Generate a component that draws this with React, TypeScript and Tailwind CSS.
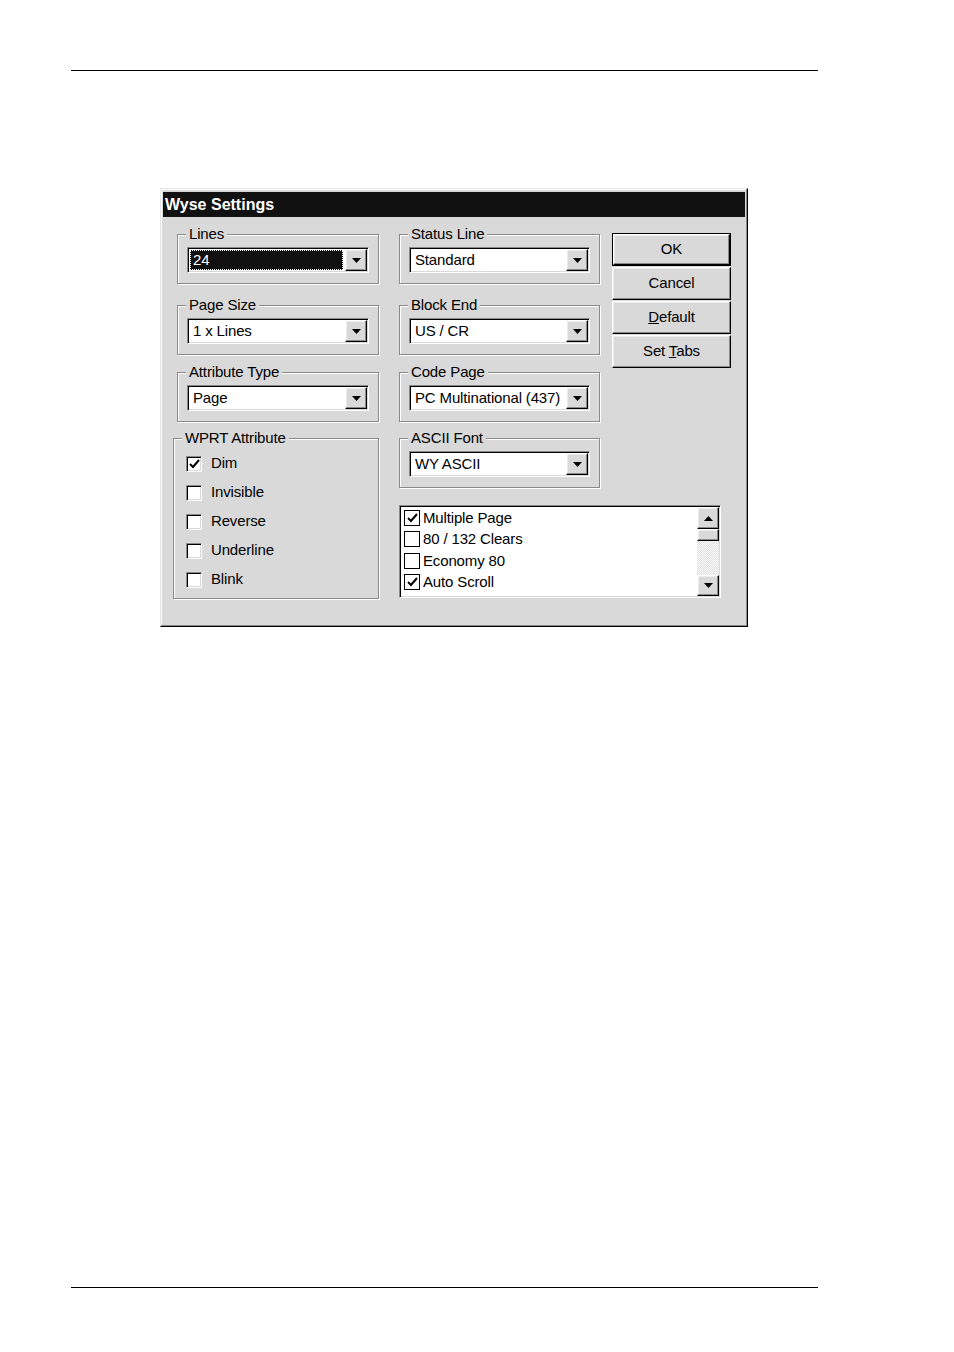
import type { ReactNode } from "react";

const face = "bg-[#d9d9d9]";
const raised =
  "border border-t-white border-l-white border-r-black border-b-black shadow-[inset_-1px_-1px_0_#8a8a8a,inset_1px_1px_0_#ececec]";
const sunken =
  "border border-t-[#8a8a8a] border-l-[#8a8a8a] border-r-white border-b-white shadow-[inset_1px_1px_0_#000,inset_-1px_-1px_0_#d9d9d9]";

function Tri({ up }: { up?: boolean }) {
  return (
    <svg width="9" height="5" viewBox="0 0 9 5">
      <polygon points={up ? "0,5 9,5 4.5,0" : "0,0 9,0 4.5,5"} fill="#000" />
    </svg>
  );
}

function Check() {
  return (
    <svg width="11" height="10" viewBox="0 0 11 10">
      <path d="M1 5 L4 8 L10 1" stroke="#000" strokeWidth="2" fill="none" />
    </svg>
  );
}

function Combo({ value, selected }: { value: string; selected?: boolean }) {
  return (
    <div className={`h-[26px] flex bg-white p-[1px] ${sunken}`}>
      {selected ? (
        <div className="flex-1 ml-[1px] mr-[2px] my-[1px] bg-[#111] border border-dotted border-white text-white flex items-center pl-[2px]">
          {value}
        </div>
      ) : (
        <div className="flex-1 flex items-center pl-[4px]">{value}</div>
      )}
      <div className={`w-[22px] flex items-center justify-center ${face} ${raised}`}>
        <Tri />
      </div>
    </div>
  );
}

function Group({
  label,
  className,
  children,
}: {
  label: string;
  className?: string;
  children: ReactNode;
}) {
  return (
    <fieldset
      className={`border border-[#8a8a8a] shadow-[1px_1px_0_#fff,inset_1px_1px_0_#fff] ${className ?? ""}`}
    >
      <legend className={`ml-[8px] px-[3px] leading-[16px] ${face}`}>{label}</legend>
      {children}
    </fieldset>
  );
}

function ComboGroup({
  label,
  value,
  selected,
  className,
}: {
  label: string;
  value: string;
  selected?: boolean;
  className?: string;
}) {
  return (
    <Group label={label} className={className}>
      <div className="px-[9px] pt-[5px] pb-[10px]">
        <Combo value={value} selected={selected} />
      </div>
    </Group>
  );
}

function Btn({ children, isDefault }: { children: ReactNode; isDefault?: boolean }) {
  if (isDefault) {
    return (
      <div className="h-[33px] border border-black">
        <div className={`h-full flex items-center justify-center ${face} ${raised}`}>{children}</div>
      </div>
    );
  }
  return (
    <div className={`h-[33px] mt-[1px] flex items-center justify-center ${face} ${raised}`}>
      {children}
    </div>
  );
}

const attrs = [
  { label: "Dim", on: true },
  { label: "Invisible", on: false },
  { label: "Reverse", on: false },
  { label: "Underline", on: false },
  { label: "Blink", on: false },
];

const options = [
  { label: "Multiple Page", on: true },
  { label: "80 / 132 Clears", on: false },
  { label: "Economy 80", on: false },
  { label: "Auto Scroll", on: true },
];

export default function App() {
  return (
    <div className="w-[954px] h-[1352px] bg-white flex flex-col font-['Liberation_Sans',Arial,sans-serif] text-[15px] tracking-[-0.01em] text-black">
      <div className="mt-[70px] ml-[71px] w-[747px] h-px bg-black" />

      <div
        className={`mt-[117px] ml-[160px] w-[588px] h-[439px] p-[2px] border border-t-[#e4e4e4] border-l-[#e4e4e4] border-r-black border-b-black shadow-[inset_-1px_-1px_0_#8a8a8a,inset_1px_1px_0_#fff] ${face} flex flex-col`}
      >
        <div className="h-[25px] mt-[1px] bg-[#111] text-white font-bold text-[16px] tracking-normal flex items-center pl-[2px]">
          Wyse Settings
        </div>

        <div className="flex pl-[10px] pt-[9px]">
          {/* left column */}
          <div className="w-[206px] flex flex-col">
            <ComboGroup label="Lines" value="24" selected className="ml-[4px]" />
            <ComboGroup label="Page Size" value="1 x Lines" className="ml-[4px] mt-[13px]" />
            <ComboGroup label="Attribute Type" value="Page" className="ml-[4px] mt-[9px]" />
            <Group label="WPRT Attribute" className="mt-[8px]">
              <div className="pl-[12px] pt-[3px] pb-[4px]">
                {attrs.map((a) => (
                  <div key={a.label} className="h-[29px] flex items-center">
                    <div
                      className={`w-[16px] h-[16px] bg-white flex items-center justify-center ${sunken}`}
                    >
                      {a.on && <Check />}
                    </div>
                    <span className="ml-[9px]">{a.label}</span>
                  </div>
                ))}
              </div>
            </Group>
          </div>

          {/* right area */}
          <div className="ml-[20px] flex flex-col">
            <div className="flex">
              <div className="w-[201px] flex flex-col">
                <ComboGroup label="Status Line" value="Standard" />
                <ComboGroup label="Block End" value="US / CR" className="mt-[13px]" />
                <ComboGroup label="Code Page" value="PC Multinational (437)" className="mt-[9px]" />
                <ComboGroup label="ASCII Font" value="WY ASCII" className="mt-[8px]" />
              </div>
              <div className="ml-[12px] w-[119px] mt-[7px] flex flex-col">
                <Btn isDefault>OK</Btn>
                <Btn>Cancel</Btn>
                <Btn>
                  <span>
                    <span className="underline">D</span>efault
                  </span>
                </Btn>
                <Btn>
                  <span>
                    Set <span className="underline">T</span>abs
                  </span>
                </Btn>
              </div>
            </div>

            {/* option list */}
            <div className={`mt-[17px] w-[322px] h-[93px] bg-white flex p-[1px] ${sunken}`}>
              <div className="flex-1 pl-[3px]">
                {options.map((o) => (
                  <div key={o.label} className="h-[21.5px] flex items-center">
                    <div className="w-[16px] h-[16px] border border-black bg-white flex items-center justify-center">
                      {o.on && <Check />}
                    </div>
                    <span className="ml-[3px]">{o.label}</span>
                  </div>
                ))}
              </div>
              <div className="w-[22px] flex flex-col">
                <div className={`h-[22px] flex items-center justify-center ${face} ${raised}`}>
                  <Tri up />
                </div>
                <div className={`h-[12px] ${face} ${raised}`} />
                <div className="flex-1 bg-[repeating-conic-gradient(#dcdcdc_0_25%,#ffffff_0_50%)] bg-[length:2px_2px]" />
                <div className={`h-[21px] flex items-center justify-center ${face} ${raised}`}>
                  <Tri />
                </div>
              </div>
            </div>
          </div>
        </div>
      </div>

      <div className="mt-[660px] ml-[71px] w-[747px] h-px bg-black" />
    </div>
  );
}
